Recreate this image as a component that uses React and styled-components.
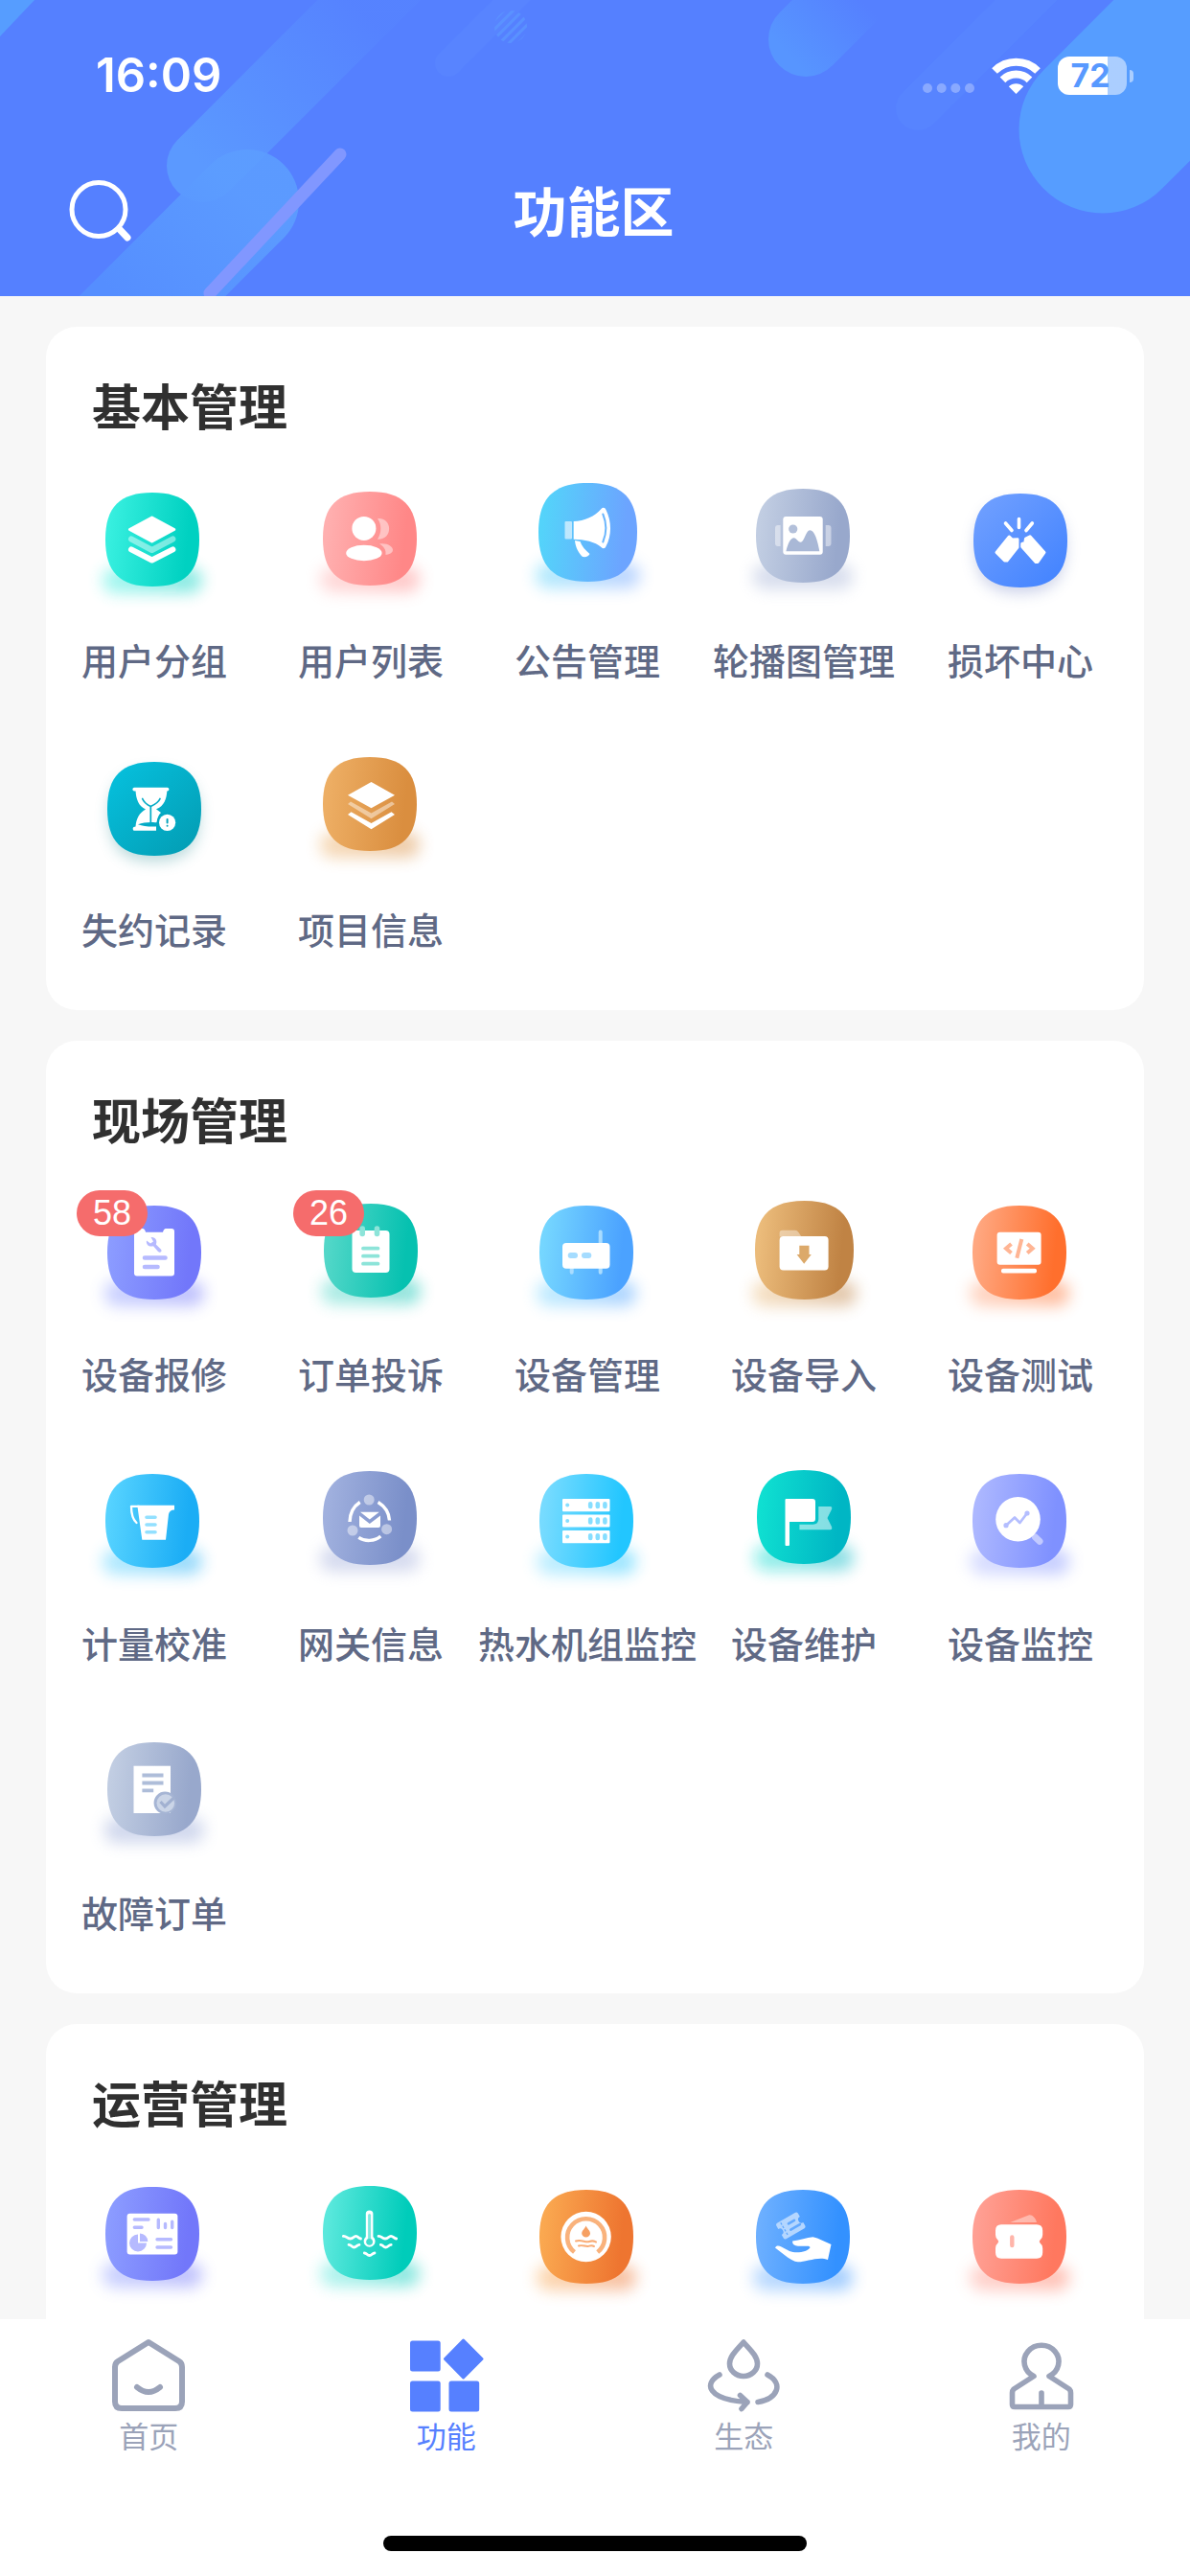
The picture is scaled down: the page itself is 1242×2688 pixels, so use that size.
import React, { useId } from 'react';
import styled, { createGlobalStyle } from 'styled-components';

const GlobalStyle = createGlobalStyle`
  * { box-sizing: border-box; }
  body {
    margin: 0;
    background: #f7f7f7;
    font-family: "Liberation Sans", "Noto Sans CJK SC", sans-serif;
  }
  button { font-family: inherit; }
`;

const Screen = styled.div`
  display: flex;
  flex-direction: column;
  height: 100vh;
  overflow: hidden;
`;

const Header = styled.header`
  position: relative;
  flex: none;
  background: #5580ff;
  color: #fff;
  padding: 55px 59px 46px 56px;
  overflow: hidden;
`;

const Backdrop = styled.svg`
  position: absolute;
  inset: 0;
  width: 100%;
  height: 100%;
`;

const StatusBar = styled.div`
  position: relative;
  display: flex;
  justify-content: space-between;
  align-items: center;
  height: 48px;
  padding-left: 44px;
`;

const Time = styled.span`
  font: 600 49px/48px Inter, sans-serif;
`;

const StatusIcons = styled.div`
  display: flex;
  align-items: center;
  gap: 18px;
`;

const SignalDots = styled.svg`
  width: 54px;
  height: 10px;
  margin-top: 26px;
`;

const Wifi = styled.svg`
  width: 51px;
  height: 38px;
`;

const Battery = styled.div`
  display: flex;
  align-items: center;
  gap: 3px;
`;

const BatteryBody = styled.div`
  width: 72px;
  height: 40px;
  padding-right: 4px;
  border-radius: 12px;
  background: linear-gradient(90deg, #fff 72%, rgba(255, 255, 255, 0.5) 72%);
  color: #5899ff;
  font: 700 34px/40px Inter, sans-serif;
  text-align: center;
`;

const BatteryCap = styled.div`
  width: 4px;
  height: 13px;
  border-radius: 0 4px 4px 0;
  background: rgba(255, 255, 255, 0.5);
`;

const NavBar = styled.div`
  position: relative;
  display: grid;
  grid-template-columns: 100px 1fr 100px;
  align-items: center;
  height: 80px;
  margin-top: 80px;
`;

const SearchButton = styled.button`
  width: 100px;
  height: 80px;
  padding: 0 0 0 14px;
  border: 0;
  background: none;
  color: #fff;
  text-align: left;
  svg { display: block; width: 70px; height: 70px; }
`;

const PageTitle = styled.h1`
  margin: 0;
  font-size: 56px;
  line-height: 80px;
  font-weight: 700;
  text-align: center;
`;

const Main = styled.main`
  flex: 1;
  min-height: 0;
  display: flex;
  flex-direction: column;
  gap: 32px;
  padding: 32px 48px 0;
  overflow-y: auto;
  scrollbar-width: none;
`;

const Card = styled.section`
  flex: none;
  padding: 51px 16px 57px 0;
  border-radius: 32px;
  background: #fff;
`;

const CardTitle = styled.h2`
  margin: 0 0 28px 48px;
  color: #303030;
  font-size: 51px;
  line-height: 70px;
  font-weight: 700;
`;

const Grid = styled.div`
  display: grid;
  grid-template-columns: repeat(5, minmax(0, 1fr));
  row-gap: 55px;
`;

const Item = styled.button`
  display: flex;
  flex-direction: column;
  align-items: center;
  gap: 26px;
  height: 226px;
  padding: 0;
  border: 0;
  background: none;
  color: #5f6985;
  font-size: 38px;
  line-height: 50px;
  font-weight: 500;
  white-space: nowrap;
`;

const IconBox = styled.span`
  position: relative;
  display: block;
  width: 150px;
  height: 150px;
  svg { display: block; width: 150px; height: 150px; overflow: visible; }
`;

const Badge = styled.span`
  position: absolute;
  left: -6px;
  top: 7px;
  height: 48px;
  padding: 0 17px;
  border-radius: 24px;
  background: #f56c6c;
  color: #fff;
  font-size: 36px;
  line-height: 48px;
  font-weight: 400;
`;

const TabBar = styled.nav`
  flex: none;
  padding: 20px 0 26px;
  background: #fff;
`;

const Tabs = styled.div`
  display: grid;
  grid-template-columns: repeat(4, 1fr);
`;

const Tab = styled.a`
  display: flex;
  flex-direction: column;
  align-items: center;
  gap: 6px;
  color: ${(p) => (p.$active ? '#5680ff' : '#9ba3b9')};
  font-size: 31px;
  line-height: 40px;
  text-decoration: none;
  svg { display: block; width: 78px; height: 78px; }
`;

const HomeIndicator = styled.div`
  width: 442px;
  height: 16px;
  margin: 82px auto 0;
  border-radius: 8px;
  background: #000;
`;

const SQUIRCLE = 'M49 0C83 0 98 15 98 49C98 83 83 98 49 98C15 98 0 83 0 49C0 15 15 0 49 0Z';

function FeatureIcon({ icon }) {
  const id = useId().replace(/[^a-zA-Z0-9]/g, '');
  const { x, y, size = 98, from, to, shadow, soft, slanted, art } = icon;
  return (
    <svg viewBox="0 0 150 150" aria-hidden="true">
      <defs>
        <linearGradient id={`g${id}`} x1="0" y1="0" x2="1" y2={slanted ? 1 : 0.1}>
          <stop offset="0.08" stopColor={from} />
          <stop offset="0.92" stopColor={to} />
        </linearGradient>
        <filter id={`b${id}`} x="-40%" y="-150%" width="180%" height="400%">
          <feGaussianBlur stdDeviation="8" />
        </filter>
      </defs>
      <g transform={`translate(${x} ${y})`}>
        {soft ? (
          <path d={SQUIRCLE} fill={shadow || to} opacity="0.36" transform="translate(2 10) scale(0.96)" filter={`url(#b${id})`} />
        ) : (
          <rect x="-3" y={size - 20} width={size + 6} height="27" rx="13" fill={shadow || `url(#g${id})`} opacity="0.45" filter={`url(#b${id})`} />
        )}
        <path d={SQUIRCLE} fill={`url(#g${id})`} transform={`scale(${size / 98})`} />
        {art}
      </g>
    </svg>
  );
}

const w = '#fff';
const line = (d, stroke, strokeWidth, extra) => (
  <path d={d} fill="none" stroke={stroke} strokeWidth={strokeWidth} strokeLinecap="round" strokeLinejoin="round" {...extra} />
);

const ICONS = {
  layers: {
    x: 24, y: 24, from: '#37efdf', to: '#00d1c1',
    art: (
      <>
        <path d="M48.6 26L71.8 38.5L48.6 51L25.4 38.5Z" fill={w} stroke={w} strokeWidth="3" strokeLinejoin="round" />
        {line('M27 48.5L48.6 60L70.4 48.5', 'rgba(255,255,255,.45)', 6)}
        {line('M27 59.3L48.6 70.5L70.4 59.3', w, 6)}
      </>
    ),
  },
  users: {
    x: 25, y: 23, from: '#ffafaf', to: '#ff8787',
    art: (
      <>
        <circle cx="42.9" cy="38.4" r="12.5" fill={w} />
        <ellipse cx="42.9" cy="64" rx="18.7" ry="8.3" fill={w} />
        <path d="M57 28C73 26.500 73.500 50.500 57 49.700C61.500 43 61.500 34 57 28Z" fill={w} opacity="0.45" />
        <path d="M59 54.400C68 53.500 73 57.500 73 60.800C73 64 69 65.800 65.300 65.800C66.500 61 63.500 57 59 54.400Z" fill={w} opacity="0.45" />
      </>
    ),
  },
  megaphone: {
    x: 24, y: 14, size: 103, from: '#54d3fa', to: '#6ca4ff',
    art: (
      <>
        <rect x="27.500" y="40" width="7.500" height="18.500" rx="1" fill={w} opacity="0.6" />
        <path d="M36.700 40C48 40 59 34.500 65.500 27C67.500 24.800 69.500 26 70.500 28C76.500 40 76.500 55 70.500 66C69.500 68.500 67.500 69 65.500 67C59 61.500 48 58.800 36.700 58.800Z" fill={w} />
        {line('M67.300 32.500C71.300 42 71.300 52 67.300 61.500', '#6bb6fd', 2)}
        <path d="M38 60L43.500 61C45 66 49 70 53.500 74C52.500 76.500 50 77.500 46 77C42 73 38.500 67 38 60Z" fill={w} />
      </>
    ),
  },
  carousel: {
    x: 25, y: 20, from: '#c1cde2', to: '#98a8cc', shadow: '#a8b5d8',
    art: (
      <>
        <path d="M25.600 38H23Q20 38 20 41V57Q20 60 23 60H25.600ZM72.700 38H75.500Q78.500 38 78.500 41V57Q78.500 60 75.500 60H72.700Z" fill={w} opacity="0.45" />
        <rect x="28.300" y="29" width="41.400" height="39.700" rx="3" fill={w} />
        <circle cx="38.700" cy="42" r="4.600" fill="#b3c0da" />
        <path d="M31.400 65.300C33.500 56 36.500 51.300 39.500 51.300C42.500 51.300 43.500 55.700 46.700 55.700C50.500 55.700 52 43.200 56.300 43.200C61 43.200 64.500 54 66.300 65.300Z" fill="#a9b8d6" />
      </>
    ),
  },
  clap: {
    x: 26, y: 25, from: '#6f9fff', to: '#4484ff', shadow: '#7384c4', soft: true, slanted: true,
    art: (
      <>
        {line('M47.500 26.500V35.500M33.500 31L40 38.500M61.300 31L55 38.500', w, 3.6)}
        <path d="M37.300 45L40.500 48L46 47.800V56L35 70H32.500L24 61.500Z" fill={w} stroke={w} strokeWidth="3" strokeLinejoin="round" />
        <path d="M54.500 47L59 44.800L74 61.500L67 71.500H65L50.700 55.500V52.500L53.800 51.500Z" fill={w} stroke={w} strokeWidth="3" strokeLinejoin="round" />
      </>
    ),
  },
  hourglass: {
    x: 26, y: 24, from: '#06bfdc', to: '#039eb5', shadow: '#3c969c', soft: true, slanted: true,
    art: (
      <>
        <rect x="26.400" y="26.700" width="38" height="3.800" rx="1.800" fill={w} />
        <path d="M29.500 29.500H62.400C61.800 39 59.500 46 51 49.300L56 53C52.500 56 51.500 62 51 68V71.700H27.500Q25.800 69.500 27.500 68L29.500 67.500C30 59.500 33.500 53 40 49.500C32.500 46 30 39 29.500 29.500Z" fill={w} />
        {line('M36.700 38.500C38.300 42.500 41 44.500 45.300 46.500C49.600 44.500 53.300 42.500 55 38.500M45.300 46.500V63', '#04abc6', 1.7)}
        <path d="M32 65.300C38 62.800 48 62.600 53 63.700V67.300C46 68 38 67.500 32 65.300Z" fill="#04abc6" />
        <circle cx="62.600" cy="63.300" r="10.800" fill="#04a8c1" />
        <circle cx="62.600" cy="63.300" r="8.600" fill={w} />
        {line('M62.600 60V63.500M62.600 66.700V66.800', '#04a4bc', 2)}
      </>
    ),
  },
  project: {
    x: 25, y: 19, from: '#edae64', to: '#da8e3f',
    art: (
      <>
        <path d="M50.500 26L75 39.700L50.500 53.300L26 39.700Z" fill={w} />
        <path d="M29 46.500L50.500 58.500L72 46.500L75 49L50.500 64.300L26 49Z" fill={w} opacity="0.45" />
        <path d="M29.500 57.300L50.500 69L71.500 57.300L75 60L50.500 75.300L26 60Z" fill={w} />
      </>
    ),
  },
  repair: {
    x: 26, y: 23, from: '#8b9bff', to: '#7277fa',
    art: (
      <>
        <path d="M31 24H37Q39 24 40 27.700H58Q59 24 61 24H67Q70 24 70 27V70.500Q70 73.500 67 73.500H31Q28 73.500 28 70.500V27Q28 24 31 24Z" fill={w} />
        <path d="M45.500 33C50.500 32.500 52.500 37 50.800 40.500L56.300 46C57.300 48.500 54.800 49.500 53 48L48 42.300C44 43.500 40 41 41 36.500L45 39.500L48 37.500Z" fill="#b6baff" />
        {line('M39 54.500H60.500M39 64H52.500', '#b6baff', 4.6)}
      </>
    ),
  },
  complaint: {
    x: 26, y: 21, from: '#52d7c8', to: '#06c1b0',
    art: (
      <>
        <rect x="29.500" y="28" width="39" height="44" rx="4" fill={w} />
        {line('M40.200 26V31.500M55.500 26V31.500', '#8de4d9', 5.6)}
        {line('M41 46.700H56.500M41 54.700H56.500M41 62.700H56.500', '#8de4d9', 3.8)}
      </>
    ),
  },
  router: {
    x: 25, y: 23, from: '#75d6ff', to: '#4ba2ff',
    art: (
      <>
        {line('M63.700 27.500V40M33.700 64V69.700M63.700 64V69.700', '#a9dcff', 4)}
        <rect x="24" y="39" width="49.500" height="26.700" rx="4" fill={w} />
        {line('M32.700 52H37M47 52H51.300', '#a5dcff', 6)}
      </>
    ),
  },
  folder: {
    x: 24, y: 18, size: 103, from: '#ebbb7a', to: '#c08344',
    art: (
      <>
        <path d="M25.600 37.500V33.500Q25.600 30.700 28.500 30.700H42Q44 30.700 45.500 33L48.500 37.500Z" fill={w} opacity="0.4" />
        <rect x="25.600" y="37" width="51" height="35.500" rx="4" fill={w} />
        <path d="M46.300 46.700H56.500V56H58.800L51.200 65.700L43.600 56H46.300Z" fill="#dca96a" />
      </>
    ),
  },
  code: {
    x: 25, y: 23, from: '#ffa780', to: '#ff6f2d',
    art: (
      <>
        <rect x="25.600" y="27.700" width="46" height="34" rx="3" fill={w} />
        <rect x="30" y="65.700" width="37" height="4.800" rx="2" fill={w} />
        <path d="M40.500 40L35 44.800L40.500 49.600M57.200 40L62.700 44.800L57.200 49.600M51.300 35L46.300 54.700" fill="none" stroke="#ffb594" strokeWidth="4" />
      </>
    ),
  },
  beaker: {
    x: 24, y: 22, from: '#55d2ff', to: '#1badf5',
    art: (
      <>
        <path d="M33.300 32.700H72V37.500C68.500 37.500 66.500 39.500 66 42L63 68.700H38.300Z" fill={w} />
        {line('M35 33.800H27C27 41 29 48 32.500 51', w, 2.3)}
        {line('M43 45.200H52M43 53H52M43 60.700H52', '#92e0ff', 3.6)}
      </>
    ),
  },
  gateway: {
    x: 25, y: 19, from: '#a0b0de', to: '#7a8fc9', shadow: '#a3aedb',
    art: (
      <>
        <path d="M38.700 32.500C32.500 36.500 28.300 43 28 53M57.600 32.500C64 36.500 69 43 69.500 51.500M37.300 69.300C44 73.800 54 73.500 60.300 68" fill="none" stroke={w} strokeWidth="3.400" />
        <g fill={w} opacity="0.45">
          <circle cx="48.200" cy="30" r="5.500" />
          <circle cx="31" cy="62" r="5.500" />
          <circle cx="66.600" cy="60.700" r="5.500" />
        </g>
        <path d="M39 42.700H58.800L48.800 50.500Z" fill={w} />
        <path d="M38 46.500L48.800 55L60 46.500V57Q60 59 58 59H40Q38 59 38 57Z" fill={w} />
      </>
    ),
  },
  server: {
    x: 25, y: 22, from: '#77dbff', to: '#22c6ff',
    art: (
      <>
        {[26, 42.4, 59].map((top) => (
          <g key={top}>
            <rect x="24" y={top} width="49.500" height="13.200" rx="1" fill={w} />
            <circle cx="29.200" cy={top + 6.6} r="2" fill="#86deff" />
            {line(`M53.200 ${top + 5.2}v2.800M60.800 ${top + 5.2}v2.800M68.400 ${top + 5.2}v2.800`, '#86deff', 4.6)}
          </g>
        ))}
      </>
    ),
  },
  flag: {
    x: 26, y: 18, from: '#0fdfd1', to: '#00b6c4',
    art: (
      <>
        <path d="M30.500 30H58Q61 30 61 33V51Q61 54 58 54H34V78Q34 79 33 79H30.500Q29.500 79 29.500 78V31Q29.500 30 30.500 30Z" fill={w} />
        <path d="M64.300 38H76.500Q79 38 78 41L73.500 50L78 59Q79 62.300 76.500 62.300H44.400V56.700H58.500Q64.300 56.700 64.300 51Z" fill={w} opacity="0.52" />
      </>
    ),
  },
  monitor: {
    x: 25, y: 22, from: '#acb7ff', to: '#7f91ff',
    art: (
      <>
        {line('M65.500 66L70 70.300', '#c2caff', 7)}
        <circle cx="47.500" cy="47.300" r="23.300" fill={w} />
        {line('M35 53.700L44 45.500L49.400 51L57 41', '#b4beff', 2.7)}
        <circle cx="35" cy="53.700" r="2.600" fill="#b4beff" />
        <circle cx="57" cy="41" r="2.600" fill="#b4beff" />
      </>
    ),
  },
  faultOrder: {
    x: 26, y: 21, from: '#c1cde2', to: '#98a8cc', shadow: '#98a8d8',
    art: (
      <>
        <rect x="27.500" y="24.700" width="38.500" height="49.300" fill={w} />
        <path d="M36.400 34.500H58.500M36.400 42.500H58.500M36.400 50.300H48.200" stroke="#aebdd9" strokeWidth="3.800" />
        <circle cx="60.200" cy="63.200" r="11.600" fill="#a6b5d4" />
        <circle cx="60.800" cy="63.500" r="9.300" fill="#cbd5e7" />
        <path d="M55.500 62L60 67L70 57.500" fill="none" stroke="#a2b1d1" strokeWidth="3.200" />
      </>
    ),
  },
  report: {
    x: 24, y: 21, from: '#8b9bff', to: '#7277fa',
    art: (
      <>
        <rect x="22.600" y="27.700" width="52.800" height="42.700" rx="3" fill={w} />
        {line('M30.300 34H45M30.300 42.300H38M54 54.700H68.500M54 63H68.500', '#b6baff', 3.4)}
        {line('M55.300 34.300V42.500M62.500 38.500V42.500M69.700 36.300V42.500', '#b6baff', 3.4)}
        <path d="M34 49.500A9 9 0 1 0 43 58.500H34Z" fill="#b6baff" />
        <path d="M36 48.500A8.500 8.500 0 0 1 44.300 57H36Z" fill="#b6baff" />
      </>
    ),
  },
  temperature: {
    x: 25, y: 20, from: '#5ae8dc', to: '#00ccba',
    art: (
      <>
        <path d="M44.800 53V29Q44.800 25.500 48.600 25.500Q52.400 25.500 52.400 29V53A6 6 0 1 1 44.800 53Z" fill={w} />
        {line('M48.600 30.500V57', '#7eeae0', 3)}
        <circle cx="48.600" cy="58.300" r="3.400" fill="#3fdccd" />
        {line('M21.300 52.300C25 52 25 55 28.500 55S32 52.300 34.500 52.300S36.500 54.500 39.500 55M58 52.300C61.500 52 61.500 55 65 55S68.500 52.300 71 52.300S74 54.500 76.700 55M27 61.300C30 61.500 30 64 32.500 64S35.500 61.500 38 61.300M60.300 61.300C63 61.500 63 64 65.500 64S68.500 61.500 71.200 61.300M43.300 70C46 70 46 72.500 48.600 72.500S51.500 70 54 70', w, 2.8)}
      </>
    ),
  },
  gauge: {
    x: 25, y: 24, from: '#faa850', to: '#ee7530',
    art: (
      <>
        <circle cx="48.600" cy="49" r="26.200" fill={w} />
        {line('M36.500 65A19.500 19.500 0 1 1 60.700 65', '#f9b27c', 4.6, { strokeLinecap: 'butt' })}
        <path d="M48.600 37.500C50 41 53 42.500 53 45.500A4.400 4 0 0 1 44.200 45.500C44.200 42.500 47.200 41 48.600 37.500Z" fill="#f6a063" />
        {line('M38 53.500C44 51.500 48 55.500 52 54S57 53.500 59 54.500M41 58.500C45 57 49 60 52 58.700S55 58.500 57 59', '#f9ac76', 2)}
      </>
    ),
  },
  coupon: {
    x: 25, y: 24, from: '#6cafff', to: '#3391ff',
    art: (
      <>
        <path d="M20 60.500C21 57.800 24 58 26.500 59.500L35 64C41 66.500 54 65.500 56.600 60L55 58.700H44C40.500 58.700 37.500 56.500 38.200 53.500C46 52.500 53 49.700 59.500 49.200L64 50.500L78.500 57L75 73C69 70.500 62 72 55 73.500C50 74.500 46.500 75.500 43.500 75.300C40 75 36 72.500 33 70.500Z" fill={w} />
        <g transform="translate(36.300 37.500) rotate(-30)">
          <path d="M-13 -9.500H11Q13 -9.500 13 -7.500V-3.500A3.500 3.500 0 0 0 13 3.500V7.500Q13 9.500 11 9.500H-11Q-13 9.500 -13 7.500V3.500A3.500 3.500 0 0 0 -13 -3.500V-7.500Q-13 -9.500 -11 -9.500Z" fill="#b4d6ff" />
          <path d="M-7.500 -8V8" stroke="#62a9ff" strokeWidth="1.300" strokeDasharray="2.500 1.500" />
          {line('M-1 -3H6M-2 3.500H9', '#62a9ff', 2.6)}
        </g>
      </>
    ),
  },
  ticket: {
    x: 25, y: 24, from: '#ff9f93', to: '#ff785f',
    art: (
      <>
        <path d="M39.400 34L58.500 26.500C62 25.500 65.500 29 67 34Z" fill={w} opacity="0.42" />
        <path d="M30 36.300H67Q73.200 36.300 73.200 42.500V47Q73.200 50.500 70.500 52.500Q69 54 70.500 55.500Q73.200 57.500 73.200 61V65.500Q73.200 71.700 67 71.700H30Q24 71.700 24 65.500V61Q24 57.500 26.500 55.500Q28 54 26.500 52.500Q24 50.500 24 47V42.500Q24 36.300 30 36.300Z" fill={w} />
        {line('M41.300 49.500V58', '#ffb5aa', 4.4)}
      </>
    ),
  },
};

const SECTIONS = [
  {
    title: '基本管理',
    items: [
      ['用户分组', 'layers'], ['用户列表', 'users'], ['公告管理', 'megaphone'], ['轮播图管理', 'carousel'], ['损坏中心', 'clap'],
      ['失约记录', 'hourglass'], ['项目信息', 'project'],
    ],
  },
  {
    title: '现场管理',
    items: [
      ['设备报修', 'repair', 58], ['订单投诉', 'complaint', 26], ['设备管理', 'router'], ['设备导入', 'folder'], ['设备测试', 'code'],
      ['计量校准', 'beaker'], ['网关信息', 'gateway'], ['热水机组监控', 'server'], ['设备维护', 'flag'], ['设备监控', 'monitor'],
      ['故障订单', 'faultOrder'],
    ],
  },
  {
    title: '运营管理',
    items: [['', 'report'], ['', 'temperature'], ['', 'gauge'], ['', 'coupon'], ['', 'ticket']],
  },
];

const TABS = [
  {
    label: '首页',
    art: line('M38 4L70 24Q73 26 73 30V66Q73 73 66 73H10Q3 73 3 66V30Q3 26 6 24ZM26 51Q38 61 50 51', 'currentColor', 6),
  },
  {
    label: '功能',
    active: true,
    art: (
      <g fill="currentColor">
        <rect x="0" y="2.500" width="31.700" height="32" rx="2.500" />
        <rect x="0" y="44.500" width="31.700" height="32" rx="2.500" />
        <rect x="40.500" y="44.500" width="31.700" height="32" rx="2.500" />
        <path d="M55.600 2L75 21.500L55.600 41L36.500 21.500Z" stroke="currentColor" strokeWidth="3" strokeLinejoin="round" />
      </g>
    ),
  },
  {
    label: '生态',
    art: (
      <>
        {line('M38 4C31 12 23.500 18.500 23.500 26.500A14.500 13 0 0 0 52.500 26.500C52.500 18.500 45 12 38 4Z', 'currentColor', 5.6)}
        {line('M13 38C-4 47 0 64 42 66.500M63 38C80 47 74 63 53 66.500M34.500 59.500L42 66.500L36 73.500', 'currentColor', 5.6)}
      </>
    ),
  },
  {
    label: '我的',
    art: line('M30 39.500A18 17 0 1 1 46 39.500L67 53Q68.500 54.500 68.500 57V69Q68.500 71.500 66 71.500H10Q7.500 71.500 7.500 69V57Q7.500 54.500 9 53ZM38 57V70', 'currentColor', 5.6),
  },
];

function HeaderBackdrop() {
  return (
    <Backdrop viewBox="0 0 1242 309" preserveAspectRatio="xMidYMin slice" aria-hidden="true">
      <defs>
        <linearGradient id="beamA" gradientUnits="userSpaceOnUse" x1="212" y1="173" x2="375" y2="10">
          <stop offset="0" stopColor="#5b99ff" />
          <stop offset="1" stopColor="#5b99ff" stopOpacity="0.1" />
        </linearGradient>
        <linearGradient id="beamB" gradientUnits="userSpaceOnUse" x1="258" y1="210" x2="140" y2="328">
          <stop offset="0" stopColor="#5c9dff" stopOpacity="0.9" />
          <stop offset="1" stopColor="#558eff" />
        </linearGradient>
        <linearGradient id="beamC" gradientUnits="userSpaceOnUse" x1="825" y1="60" x2="895" y2="-5">
          <stop offset="0" stopColor="#5795ff" />
          <stop offset="1" stopColor="#5795ff" stopOpacity="0" />
        </linearGradient>
        <pattern id="hatch" width="7" height="7" patternUnits="userSpaceOnUse" patternTransform="rotate(45)">
          <rect width="3" height="7" fill="#5c9cff" />
        </pattern>
      </defs>
      <path d="M0 0H36L0 38Z" fill="#569dff" />
      <path d="M212 173L412 -27" stroke="url(#beamA)" strokeWidth="76" strokeLinecap="round" />
      <path d="M258 210L108 360" stroke="url(#beamB)" strokeWidth="108" strokeLinecap="round" />
      <path d="M355 161L219 306" stroke="#8197ff" strokeWidth="13" strokeLinecap="round" />
      <path d="M468 66L560 -26" stroke="#5884ff" strokeWidth="28" strokeLinecap="round" />
      <circle cx="533" cy="28" r="17" fill="url(#hatch)" opacity="0.6" />
      <path d="M841 41L941 -59" stroke="url(#beamC)" strokeWidth="78" strokeLinecap="round" />
      <path d="M958 113L1108 -37" stroke="#5784ff" strokeWidth="46" strokeLinecap="round" />
      <path d="M1151 135L1351 -65" stroke="#569dff" strokeWidth="175" strokeLinecap="round" />
    </Backdrop>
  );
}

export default function App() {
  return (
    <Screen>
      <GlobalStyle />
      <Header>
        <HeaderBackdrop />
        <StatusBar>
          <Time>16:09</Time>
          <StatusIcons>
            <SignalDots viewBox="0 0 54 10" aria-hidden="true">
              {[5, 19.7, 34.3, 49].map((cx) => (
                <circle key={cx} cx={cx} cy="5" r="5" fill="#fff" opacity="0.3" />
              ))}
            </SignalDots>
            <Wifi viewBox="0 0 51 38" aria-hidden="true">
              <g fill="none" stroke="#fff" strokeWidth="8">
                <path d="M3 14A32 32 0 0 1 48 14" />
                <path d="M11.500 23.300A20 20 0 0 1 39.500 23.300" />
              </g>
              <path d="M25.500 38L17.800 30.300A11 11 0 0 1 33.200 30.300Z" fill="#fff" />
            </Wifi>
            <Battery>
              <BatteryBody>72</BatteryBody>
              <BatteryCap />
            </Battery>
          </StatusIcons>
        </StatusBar>
        <NavBar>
          <SearchButton type="button" aria-label="搜索">
            <svg viewBox="0 0 70 70" aria-hidden="true">
              <circle cx="33" cy="30.500" r="28" fill="none" stroke="#fff" strokeWidth="5" />
              <path d="M55 51.500L63 60" stroke="#fff" strokeWidth="7" strokeLinecap="round" />
            </svg>
          </SearchButton>
          <PageTitle>功能区</PageTitle>
        </NavBar>
      </Header>
      <Main>
        {SECTIONS.map((section) => (
          <Card key={section.title}>
            <CardTitle>{section.title}</CardTitle>
            <Grid>
              {section.items.map(([label, name, count]) => (
                <Item type="button" key={name} aria-label={label || name}>
                  <IconBox>
                    <FeatureIcon icon={ICONS[name]} />
                    {count && <Badge>{count}</Badge>}
                  </IconBox>
                  {label && <span>{label}</span>}
                </Item>
              ))}
            </Grid>
          </Card>
        ))}
      </Main>
      <TabBar>
        <Tabs>
          {TABS.map((tab) => (
            <Tab key={tab.label} href="#" $active={tab.active}>
              <svg viewBox="-1 0 78 78" aria-hidden="true">{tab.art}</svg>
              {tab.label}
            </Tab>
          ))}
        </Tabs>
        <HomeIndicator />
      </TabBar>
    </Screen>
  );
}
